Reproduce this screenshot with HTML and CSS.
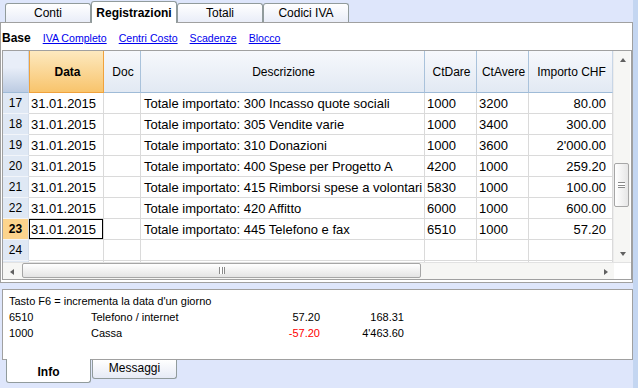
FILE: index.html
```html
<!DOCTYPE html>
<html lang="it">
<head>
  <meta charset="UTF-8" />
  <title>Registrazioni</title>
  <link rel="stylesheet" href="styles.css">
</head>
<body>
  <div class="window">
    <div class="main">
      <div class="tabs">
        <div class="tab">Conti</div>
        <div class="tab active">Registrazioni</div>
        <div class="tab">Totali</div>
        <div class="tab">Codici IVA</div>
      </div>

      <div class="panel">
        <div class="views">
          <b>Base</b>
          <a href="#">IVA Completo</a>
          <a href="#">Centri Costo</a>
          <a href="#">Scadenze</a>
          <a href="#">Blocco</a>
        </div>

        <div class="grid">
          <div class="grid-top">
            <div class="viewport">
              <table>
                <colgroup>
                  <col style="width:26px"><col style="width:75px"><col style="width:37px"><col style="width:284px">
                  <col style="width:52px"><col style="width:52px"><col style="width:84px">
                </colgroup>
                <thead>
                  <tr>
                    <th class="corner"></th>
                    <th class="sorted">Data</th>
                    <th>Doc</th>
                    <th>Descrizione</th>
                    <th>CtDare</th>
                    <th>CtAvere</th>
                    <th>Importo CHF</th>
                  </tr>
                </thead>
                <tbody>
                  <tr><td class="num">17</td><td>31.01.2015</td><td></td><td>Totale importato: 300 Incasso quote sociali</td><td>1000</td><td>3200</td><td class="amount">80.00</td></tr>
                  <tr><td class="num">18</td><td>31.01.2015</td><td></td><td>Totale importato: 305 Vendite varie</td><td>1000</td><td>3400</td><td class="amount">300.00</td></tr>
                  <tr><td class="num">19</td><td>31.01.2015</td><td></td><td>Totale importato: 310 Donazioni</td><td>1000</td><td>3600</td><td class="amount">2'000.00</td></tr>
                  <tr><td class="num">20</td><td>31.01.2015</td><td></td><td>Totale importato: 400 Spese per Progetto A</td><td>4200</td><td>1000</td><td class="amount">259.20</td></tr>
                  <tr><td class="num">21</td><td>31.01.2015</td><td></td><td>Totale importato: 415 Rimborsi spese a volontari</td><td>5830</td><td>1000</td><td class="amount">100.00</td></tr>
                  <tr><td class="num">22</td><td>31.01.2015</td><td></td><td>Totale importato: 420 Affitto</td><td>6000</td><td>1000</td><td class="amount">600.00</td></tr>
                  <tr class="current"><td class="num">23</td><td class="selected">31.01.2015</td><td></td><td>Totale importato: 445 Telefono e fax</td><td>6510</td><td>1000</td><td class="amount">57.20</td></tr>
                  <tr><td class="num">24</td><td></td><td></td><td></td><td></td><td></td><td></td></tr>
                  <tr><td class="num"></td><td></td><td></td><td></td><td></td><td></td><td></td></tr>
                </tbody>
              </table>
            </div>
            <div class="vscroll">
              <div class="arrow-box"><span class="arrow up"></span></div>
              <div class="track">
                <div class="thumb vthumb"><span class="grip"></span></div>
              </div>
              <div class="arrow-box"><span class="arrow down"></span></div>
            </div>
          </div>
          <div class="hscroll">
            <div class="arrow-box"><span class="arrow left"></span></div>
            <div class="track">
              <div class="thumb hthumb"><span class="grip"></span></div>
            </div>
            <div class="arrow-box"><span class="arrow right"></span></div>
            <div class="scroll-corner"></div>
          </div>
        </div>
      </div>

      <div class="info">
        <div class="info-line">Tasto F6 = incrementa la data d'un giorno</div>
        <div class="info-row">
          <span>6510</span><span>Telefono / internet</span><span class="r">57.20</span><span class="r">168.31</span>
        </div>
        <div class="info-row">
          <span>1000</span><span>Cassa</span><span class="r neg">-57.20</span><span class="r">4'463.60</span>
        </div>
      </div>

      <div class="bottom-tabs">
        <div class="btab active">Info</div>
        <div class="btab">Messaggi</div>
      </div>
    </div>
    <div class="edge"></div>
  </div>
</body>
</html>
```

FILE: styles.css
```css
* {
  box-sizing: border-box;
}

body {
  margin: 0;
  background: #dee6fb;
  font-family: "Liberation Sans", Arial, sans-serif;
  font-size: 11px;
  color: #000;
}

.window {
  display: flex;
  height: 388px;
  overflow: hidden;
}

.main {
  width: 633px;
}

.edge {
  flex: 1;
  background: #c4d6f1;
}

/* top tabs */
.tabs {
  display: flex;
  align-items: flex-end;
  height: 22px;
  padding-left: 5px;
}

.tab {
  width: 86px;
  height: 19px;
  border: 1px solid #919b9c;
  border-bottom: none;
  border-radius: 3px 3px 0 0;
  background: linear-gradient(to bottom, #ffffff, #e9edf8);
  font-size: 12px;
  text-align: center;
  line-height: 18px;
}

.tab.active {
  position: relative;
  z-index: 1;
  height: 22px;
  margin-bottom: -1px;
  background: #fff;
  font-weight: bold;
  line-height: 22px;
}

/* main panel */
.panel {
  height: 261px;
  width: 633px;
  background: #fff;
  border: 1px solid #a0a0a0;
}

.views {
  display: flex;
  align-items: center;
  gap: 12px;
  height: 27px;
  padding: 3px 0 0 1px;
  font-size: 10.6px;
}

.views b {
  font-size: 12px;
}

.views a {
  color: #0000ee;
  text-decoration: underline;
}

.grid {
  width: 630px;
  height: 230px;
  margin-left: 1px;
  border: 1px solid #a0a0a0;
}

.grid-top {
  display: flex;
  height: 211px;
}

.viewport {
  width: 610px;
  overflow: hidden;
}

table {
  width: 610px;
  table-layout: fixed;
  border-collapse: separate;
  border-spacing: 0;
  font-size: 13px;
}

th, td {
  padding: 0 0 0 2px;
  white-space: nowrap;
  overflow: hidden;
}

th {
  height: 42px;
  font-weight: normal;
  font-size: 12px;
  background: linear-gradient(to bottom, #f6f8fc, #e2e9f3);
  border-right: 1px solid #a9c2db;
  border-bottom: 1px solid #9fbbd7;
  text-align: center;
}

th:last-child {
  border-right-color: #c8d6e6;
}

th.corner {
  background: linear-gradient(to bottom, #e8eef8 40%, #bccbe2);
  border-right-color: #c4d2e4;
}

th.sorted {
  font-weight: bold;
  background: linear-gradient(to bottom, #fde9bf, #f8c46c);
  border-right: 1px solid #f0a23c;
  border-bottom: 1px solid #f0a23c;
  border-left: 1px solid #f0a23c;
}

td {
  height: 21px;
  border-right: 1px solid #dadada;
  border-bottom: 1px solid #dadada;
}

td:nth-child(4) {
  padding-left: 3px;
}

td.num {
  background: #dfe8f4;
  border-right-color: #d4dde9;
  border-bottom-color: #f2f5fa;
  font-size: 12px;
  text-align: center;
  padding: 0;
}

tr.current td.num {
  background: #fcd48d;
  font-weight: bold;
}

td.selected {
  box-shadow: inset 0 0 0 1px #000;
}

td.amount {
  text-align: right;
  padding-right: 6px;
}

/* scrollbars */
.vscroll {
  display: flex;
  flex-direction: column;
  width: 17px;
  background: #f6f6f4;
  border-left: 1px solid #ececec;
}

.vscroll .track {
  flex: 1;
  padding-top: 95px;
}

.arrow-box {
  display: flex;
  align-items: center;
  justify-content: center;
  width: 17px;
  height: 17px;
  flex: none;
}

.arrow {
  width: 0;
  height: 0;
  border: 3px solid transparent;
}

.arrow.up {
  border-bottom: 4px solid #606060;
  border-top-width: 0;
}

.arrow.down {
  border-top: 4px solid #606060;
  border-bottom-width: 0;
}

.arrow.left {
  border-right: 4px solid #606060;
  border-left-width: 0;
}

.arrow.right {
  border-left: 4px solid #606060;
  border-right-width: 0;
}

.thumb {
  display: flex;
  align-items: center;
  justify-content: center;
  border: 1px solid #a6a6a6;
  border-radius: 2px;
  background: linear-gradient(to right, #ffffff, #e6e6e6);
}

.vthumb {
  width: 15px;
  height: 44px;
}

.vthumb .grip {
  width: 7px;
  height: 6px;
  border-top: 1px solid #8a8a8a;
  border-bottom: 1px solid #8a8a8a;
  background: linear-gradient(#fff 2px, #8a8a8a 2px, #8a8a8a 3px, #fff 3px);
}

.hscroll {
  display: flex;
  height: 17px;
  background: #f6f6f4;
  border-top: 1px solid #e2e2e2;
}

.hscroll .track {
  flex: 1;
  padding-left: 2px;
}

.hthumb {
  width: 399px;
  height: 15px;
  background: linear-gradient(to bottom, #ffffff, #e4e4e4);
}

.hthumb .grip {
  width: 6px;
  height: 7px;
  border-left: 1px solid #8a8a8a;
  border-right: 1px solid #8a8a8a;
  background: linear-gradient(to right, #fff 2px, #8a8a8a 2px, #8a8a8a 3px, #fff 3px);
}

.scroll-corner {
  width: 17px;
  background: #fff;
}

/* info panel */
.info {
  width: 631px;
  height: 71px;
  margin: 6px 0 0 2px;
  padding: 3px 0 0 6px;
  background: #fff;
  border: 1px solid #a0a0a0;
  line-height: 16px;
}

.info-row {
  display: grid;
  grid-template-columns: 82px 171px 58px 84px;
}

.info-row .r {
  text-align: right;
}

.info-row .neg {
  color: #f00;
}

.bottom-tabs {
  display: flex;
  align-items: flex-start;
  gap: 1px;
  padding-left: 6px;
}

.btab {
  width: 85px;
  height: 19px;
  border: 1px solid #919b9c;
  border-top: none;
  border-radius: 0 0 3px 3px;
  background: linear-gradient(to bottom, #ffffff, #e6eaf6);
  font-size: 12px;
  text-align: center;
  line-height: 17px;
}

.btab.active {
  position: relative;
  height: 24px;
  margin-top: -1px;
  background: #fff;
  font-weight: bold;
  line-height: 26px;
}
```
